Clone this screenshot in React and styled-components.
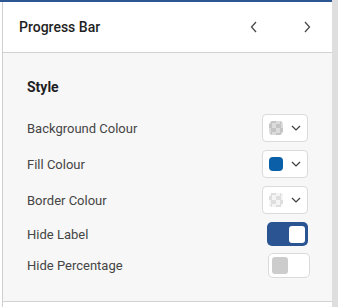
import React from 'react'
import styled, { createGlobalStyle } from 'styled-components'

const GlobalStyle = createGlobalStyle`
  html, body { margin: 0; padding: 0; background: #ffffff; }
  body { font-family: Roboto, "Liberation Sans", Arial, sans-serif; }
`

const Frame = styled.div`
  display: flex;
  width: 338px;
  height: 307px;
  background: #ffffff;
`
const Panel = styled.div`
  display: flex;
  flex-direction: column;
  width: 329px;
  margin-left: 2px;
  border-left: 1px solid #cfcfcf;
  border-top: 2px solid #2c5693;
  position: relative;
`
const TopEdge = styled.div`
  position: absolute;
  top: -2px;
  left: -3px;
  width: 3px;
  height: 2px;
  background: #2c5693;
`
const Scroll = styled.div`
  width: 6px;
  background: #dedede;
`
const Header = styled.div`
  display: flex;
  align-items: center;
  height: 50px;
  padding: 0 19px 0 16px;
  background: #ffffff;
  border-bottom: 1px solid #d2d2d2;
`
const Title = styled.div`
  flex: 1;
  font-size: 14px;
  font-weight: 500;
  color: #1f1f1f;
`
const NavButton = styled.button`
  display: flex;
  align-items: center;
  justify-content: center;
  width: 12px;
  height: 20px;
  padding: 0;
  margin-left: ${p => p.$gap}px;
  border: none;
  background: none;
`
const Body = styled.div`
  display: flex;
  flex-direction: column;
  padding: 25px 23px 23px 24px;
  background: #f7f7f7;
  border-bottom: 1px solid #d2d2d2;
`
const Section = styled.div`
  font-size: 14px;
  font-weight: 700;
  color: #1f1f1f;
  line-height: 18px;
  margin-bottom: 18px;
`
const Rows = styled.div`
  display: flex;
  flex-direction: column;
  gap: ${p => p.$gap}px;
`
const Row = styled.div`
  display: flex;
  align-items: center;
  justify-content: space-between;
  margin-top: ${p => p.$mt || 0}px;
`
const Label = styled.span`
  font-size: 13px;
  color: #454545;
`
const Picker = styled.div`
  display: flex;
  align-items: center;
  gap: 8px;
  width: 38px;
  height: 26px;
  padding-left: 6px;
  box-sizing: content-box;
  background: #ffffff;
  border: 1px solid #dadada;
  border-radius: 4px;
  margin-right: 1px;
`
const Swatch = styled.span`
  width: 14px;
  height: 14px;
  border-radius: 4px;
  background: ${p => p.$color || 'transparent'};
  ${p => p.$checker && `
    background-color: ${p.$checker[0]};
    background-image: conic-gradient(${p.$checker[1]} 25%, ${p.$checker[0]} 0 50%, ${p.$checker[1]} 0 75%, ${p.$checker[0]} 0);
    background-size: 9px 9px;
    background-position: -2px -2px;
  `}
`
const Toggle = styled.div`
  display: flex;
  align-items: center;
  justify-content: ${p => (p.$on ? 'flex-end' : 'flex-start')};
  width: ${p => (p.$on ? 41 : 42)}px;
  height: ${p => (p.$on ? 24 : 25)}px;
  padding: 0 3px;
  box-sizing: border-box;
  border-radius: 5px;
  background: ${p => (p.$on ? '#2b5592' : '#ffffff')};
  border: ${p => (p.$on ? 'none' : '1px solid #dadada')};
  margin-right: ${p => (p.$on ? 1 : -1)}px;
`
const Knob = styled.span`
  width: 16px;
  height: 17px;
  border-radius: 3px;
  background: ${p => (p.$on ? '#ffffff' : '#cccccc')};
`
const Footer = styled.div`
  flex: 1;
  background: #ffffff;
`

const Chevron = ({ dir }) => (
  <svg width="8" height="12" viewBox="0 0 8 12">
    <path
      d={dir === 'left' ? 'M6 1 L1.5 6 L6 11' : 'M2 1 L6.5 6 L2 11'}
      fill="none"
      stroke="#4a4a4a"
      strokeWidth="1.3"
    />
  </svg>
)

const Caret = () => (
  <svg width="10" height="6" viewBox="0 0 10 6">
    <path d="M1 1 L5 5 L9 1" fill="none" stroke="#3d3d3d" strokeWidth="1.2" />
  </svg>
)

const colours = [
  { label: 'Background Colour', checker: ['#dcdcdc', '#c4c4c4'] },
  { label: 'Fill Colour', color: '#0b5ea8' },
  { label: 'Border Colour', checker: ['#f4f4f4', '#dedede'] },
]

export default function App() {
  return (
    <Frame>
      <GlobalStyle />
      <Panel>
        <TopEdge />
        <Header>
          <Title>Progress Bar</Title>
          <NavButton $gap={0}><Chevron dir="left" /></NavButton>
          <NavButton $gap={41}><Chevron dir="right" /></NavButton>
        </Header>
        <Body>
          <Section>Style</Section>
          <Rows $gap={8}>
            {colours.map(c => (
              <Row key={c.label}>
                <Label>{c.label}</Label>
                <Picker>
                  <Swatch $color={c.color} $checker={c.checker} />
                  <Caret />
                </Picker>
              </Row>
            ))}
            <Row>
              <Label>Hide Label</Label>
              <Toggle $on><Knob $on /></Toggle>
            </Row>
          </Rows>
          <Row $mt={7}>
            <Label>Hide Percentage</Label>
            <Toggle><Knob /></Toggle>
          </Row>
        </Body>
        <Footer />
      </Panel>
      <Scroll />
    </Frame>
  )
}
